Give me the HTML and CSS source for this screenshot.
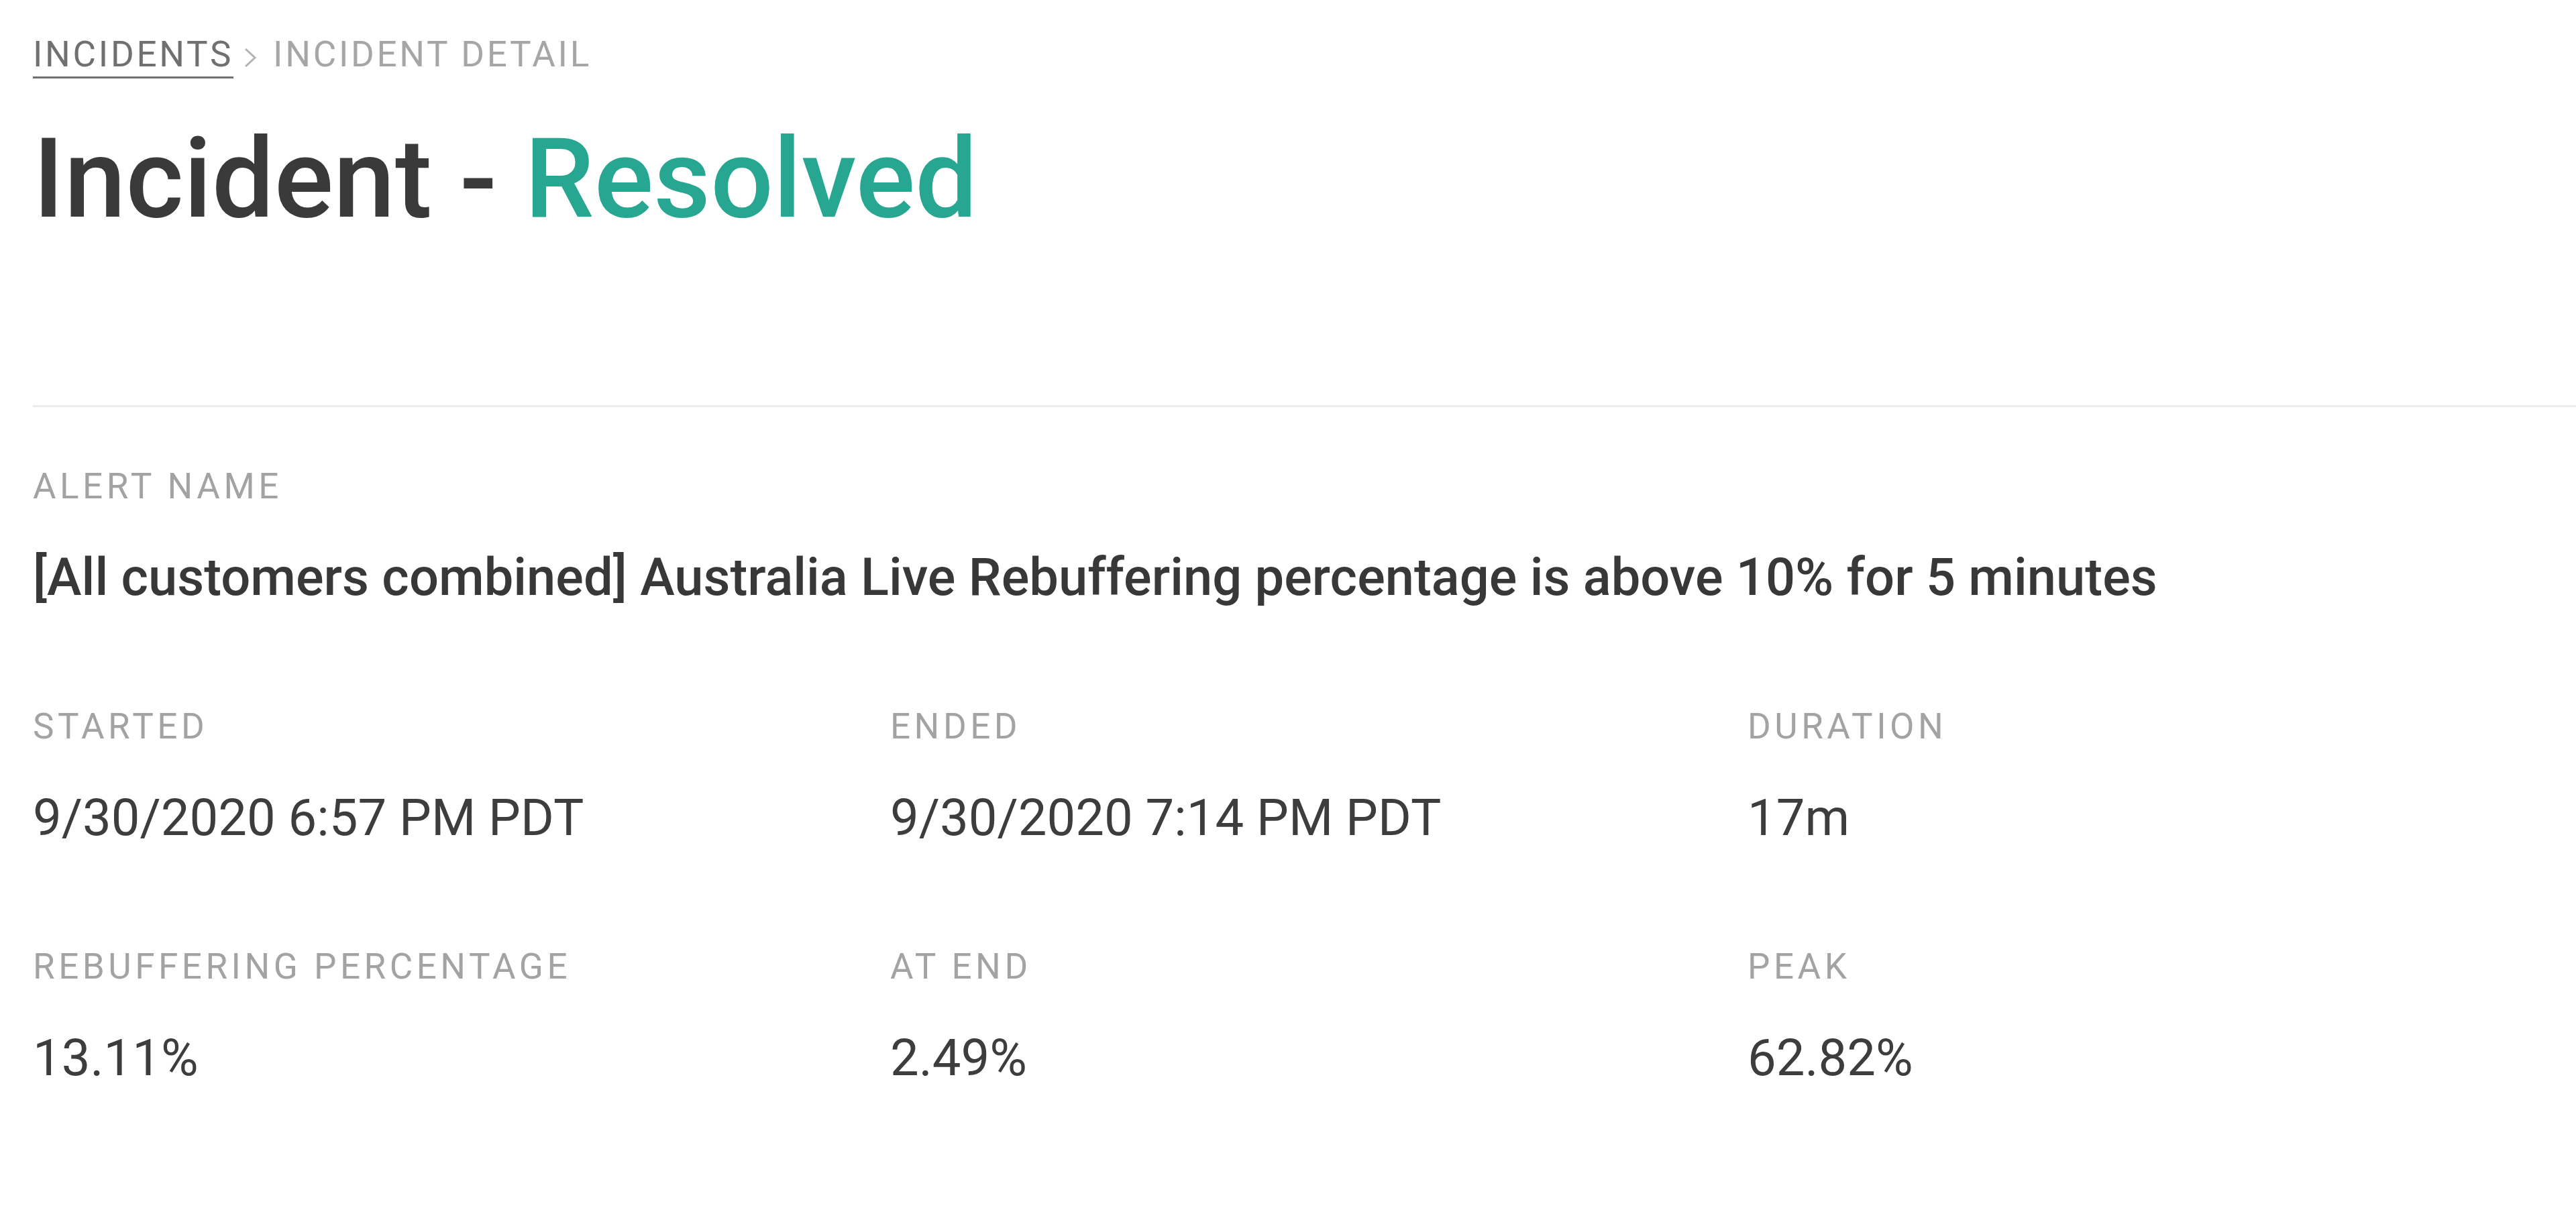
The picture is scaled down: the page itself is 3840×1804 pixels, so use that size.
FILE: index.html
```html
<!DOCTYPE html>
<html lang="en">
<head>
<meta charset="utf-8">
<title>Incident Detail</title>
<link rel="stylesheet" href="styles.css">
</head>
<body>
<main class="page">
  <nav class="crumbs">
    <a class="crumb-link" href="#">INCIDENTS</a>
    <svg class="crumb-sep" width="20" height="30" viewBox="0 0 20 30" aria-hidden="true"><polyline points="3,2 17,15 3,28" fill="none" stroke="#b3b3b3" stroke-width="3"/></svg>
    <span class="crumb-current">INCIDENT DETAIL</span>
  </nav>
  <h1 class="title">Incident - <span class="status">Resolved</span></h1>
  <hr class="divider">
  <section class="alert">
    <div class="label">ALERT NAME</div>
    <div class="alert-name">[All customers combined] Australia Live Rebuffering percentage is above 10% for 5 minutes</div>
  </section>
  <section class="stats">
    <div class="field"><div class="label">STARTED</div><div class="value">9/30/2020 6:57 PM PDT</div></div>
    <div class="field"><div class="label">ENDED</div><div class="value">9/30/2020 7:14 PM PDT</div></div>
    <div class="field"><div class="label">DURATION</div><div class="value">17m</div></div>
    <div class="field"><div class="label">REBUFFERING PERCENTAGE</div><div class="value">13.11%</div></div>
    <div class="field"><div class="label">AT END</div><div class="value">2.49%</div></div>
    <div class="field"><div class="label">PEAK</div><div class="value">62.82%</div></div>
  </section>
</main>
</body>
</html>
```
FILE: styles.css
```css
html, body {
  margin: 0;
  padding: 0;
  background: #ffffff;
}
body {
  font-family: Roboto, "Liberation Sans", Arial, sans-serif;
  color: #3b3b3b;
}
.page {
  padding: 55px 0 0 49px;
}
.crumbs {
  display: flex;
  align-items: flex-start;
  font-size: 53px;
  line-height: 53px;
  letter-spacing: 3.7px;
}
.crumb-link {
  display: inline-block;
  color: #707070;
  text-decoration: none;
  padding-bottom: 6px;
  border-bottom: 3px solid #707070;
}
.crumb-sep {
  margin: 16px 24px 0 15px;
  flex: none;
}
.crumb-current {
  color: #a6a6a6;
}
.title {
  margin: 67px 0 0;
  font-size: 165px;
  line-height: 166px;
  font-weight: 500;
  color: #3a3a3a;
}
.status {
  color: #27a791;
}
.divider {
  margin: 254px 0 0;
  border: none;
  height: 3px;
  background: #ebebeb;
}
.alert {
  margin-top: 92px;
}
.label {
  font-size: 53px;
  line-height: 53px;
  letter-spacing: 5.5px;
  color: #a3a3a3;
  margin-bottom: 71px;
}
.alert-name {
  font-size: 77.7px;
  line-height: 76px;
  font-weight: 500;
  color: #383838;
}
.stats {
  margin-top: 158px;
  display: grid;
  grid-template-columns: repeat(3, 1278px);
  row-gap: 158px;
}
.value {
  font-size: 76px;
  line-height: 76px;
  color: #3d3d3d;
}
```
